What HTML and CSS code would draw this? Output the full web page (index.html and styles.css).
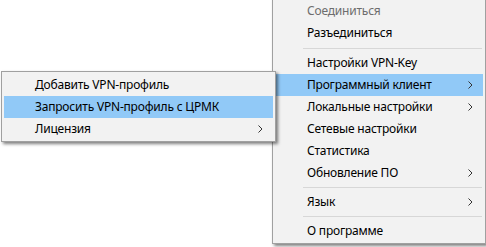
FILE: index.html
```html
<!DOCTYPE html>
<html lang="ru">
<head>
  <meta charset="utf-8" />
  <title>VPN-Key</title>
  <link rel="stylesheet" href="styles.css">
</head>
<body>
  <div class="menu menu-main">
    <div class="item disabled"><span class="label">Соединиться</span></div>
    <div class="item"><span class="label">Разъединиться</span></div>
    <div class="sep"></div>
    <div class="item"><span class="label">Настройки VPN-Key</span></div>
    <div class="item active"><span class="label">Программный клиент</span>
      <svg class="arrow" width="5" height="8" viewBox="0 0 5 8"><path d="M0.5 0.5 L4 4 L0.5 7.5" /></svg></div>
    <div class="item"><span class="label">Локальные настройки</span>
      <svg class="arrow" width="5" height="8" viewBox="0 0 5 8"><path d="M0.5 0.5 L4 4 L0.5 7.5" /></svg></div>
    <div class="item"><span class="label">Сетевые настройки</span></div>
    <div class="item"><span class="label">Статистика</span></div>
    <div class="item"><span class="label">Обновление ПО</span>
      <svg class="arrow" width="5" height="8" viewBox="0 0 5 8"><path d="M0.5 0.5 L4 4 L0.5 7.5" /></svg></div>
    <div class="sep sep-narrow"></div>
    <div class="item"><span class="label">Язык</span>
      <svg class="arrow" width="5" height="8" viewBox="0 0 5 8"><path d="M0.5 0.5 L4 4 L0.5 7.5" /></svg></div>
    <div class="sep sep-narrow"></div>
    <div class="item"><span class="label">О программе</span></div>
  </div>

  <!-- подменю "Программный клиент" -->
  <div class="menu menu-sub">
    <div class="item"><span class="label">Добавить VPN-профиль</span></div>
    <div class="item active"><span class="label">Запросить VPN-профиль с ЦРМК</span></div>
    <div class="item"><span class="label">Лицензия</span>
      <svg class="arrow" width="5" height="8" viewBox="0 0 5 8"><path d="M0.5 0.5 L4 4 L0.5 7.5" /></svg></div>
  </div>
</body>
</html>
```

FILE: styles.css
```css
*{box-sizing:border-box;}
body{
  margin:0;
  background:#fff;
  font-family:"Noto Sans","Open Sans",sans-serif;
  font-size:12px;
  letter-spacing:-0.2px;
  color:#000;
  position:relative;
  width:486px;
  height:247px;
  overflow:hidden;
}
.menu {
  position: absolute;
  background: #f2f2f2;
  border: 1px solid #a0a0a0;
  box-shadow: 2px 2px 3px rgba(0,0,0,0.5);
  display: flex;
  flex-direction: column;
}
.menu-main {
  left: 272px;
  top: -3px;
  width: 214px;
  padding: 2px 2px 1px 2px;
}
.menu-sub {
  left: 1px;
  top: 71px;
  width: 275px;
  padding: 2px 2px 1px 2px;
}
.item {
  height: 22px;
  display: flex;
  align-items: center;
  padding-left: 32px;
  padding-right: 10px;
}
.item .label { flex: 1; white-space: nowrap; padding-bottom: 1px; }
.menu-sub .item { padding-left: 31px; }
.item.active { background: #91c9f7; }
.item.disabled { color: #6d6d6d; }
.arrow path {
  fill: none;
  stroke: #333;
  stroke-width: 1;
}
.sep {
  height: 8px;
  display: flex;
  align-items: center;
  padding-left: 28px;
  padding-right: 1px;
}
.sep-narrow { height: 7px; }
.sep::before {
  content: "";
  flex: 1;
  height: 1px;
  background: #d7d7d7;
}
```
